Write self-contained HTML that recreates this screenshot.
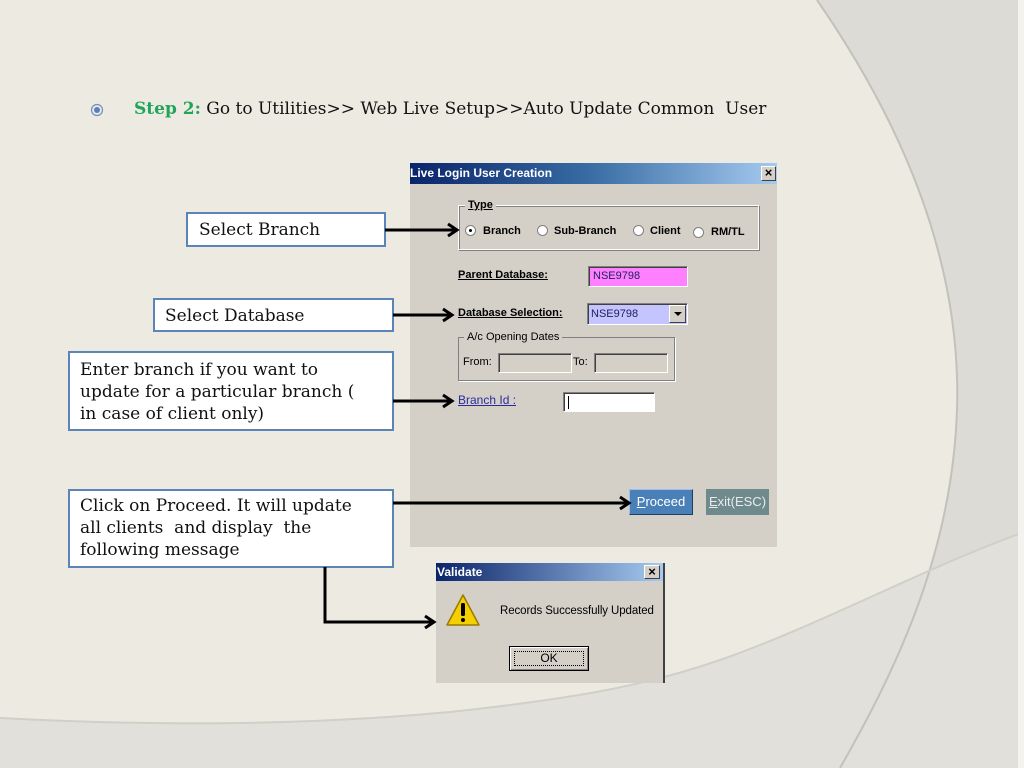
<!DOCTYPE html>
<html><head><meta charset="utf-8"><style>
*{margin:0;padding:0;box-sizing:border-box}
body{width:1024px;height:768px;position:relative;overflow:hidden;background:#ECEAE1;font-family:"Liberation Sans",sans-serif}
.a{position:absolute}
.box{position:absolute;background:#fff;border:2px solid #5B84B8;font-family:"DejaVu Serif",serif;font-size:17px;color:#111;line-height:22px;padding:5px 10px;white-space:nowrap}
.t{font-size:11px;color:#000;position:absolute;white-space:nowrap}
.field{position:absolute;border:1px solid;border-color:#808080 #fff #fff #808080;box-shadow:inset 1px 1px 0 #404040}
.radio{position:absolute;width:11px;height:11px;border-radius:50%;background:#fff;border:1px solid #808080}
</style></head><body>
<svg class="a" style="left:0;top:0" width="1024" height="768">
<path d="M817 0 C900 120 962 260 957 410 C952 560 890 680 840 768 L1024 768 L1024 0 Z" fill="#DCDBD5"/>
<path d="M0 718 C150 726 300 726 450 712 C560 700 640 688 720 660 C820 625 920 570 1024 532 L1024 768 L0 768 Z" fill="#E1E0DA"/>
<path d="M817 0 C900 120 962 260 957 410 C952 560 890 680 840 768" fill="none" stroke="#C2C1BA" stroke-width="2"/>
<path d="M0 718 C150 726 300 726 450 712 C560 700 640 688 720 660 C820 625 920 570 1024 532" fill="none" stroke="#D0CFC8" stroke-width="2"/>
<rect x="1018" y="0" width="6" height="768" fill="#F3F3F0"/>
</svg>
<svg class="a" style="left:90px;top:103px" width="14" height="14"><circle cx="7" cy="7" r="5.5" fill="none" stroke="#6C8FC4" stroke-width="1.2"/><circle cx="7" cy="7" r="3" fill="#5B7FBD"/></svg>
<div class="a" style="left:134px;top:99px;font-family:'DejaVu Serif',serif;font-size:17px;color:#111;white-space:nowrap"><b style="color:#22A45A">Step 2:</b> Go to Utilities&gt;&gt; Web Live Setup&gt;&gt;Auto Update Common&nbsp; User</div>

<div class="box" style="left:186px;top:212px;width:200px;height:35px;padding:5px 11px">Select Branch</div>
<div class="box" style="left:153px;top:298px;width:241px;height:34px;padding:5px 10px">Select Database</div>
<div class="box" style="left:68px;top:351px;width:326px;height:80px;padding:6px 10px 0">Enter branch if you want to<br>update for a particular branch (<br>in case of client only)</div>
<div class="box" style="left:68px;top:489px;width:326px;height:79px;padding:4px 10px 0">Click on Proceed. It will update<br>all clients&nbsp; and display&nbsp; the<br>following message</div>

<!-- main dialog -->
<div class="a" style="left:410px;top:163px;width:367px;height:384px;background:#D4D0C8"></div>
<div class="a" style="left:410px;top:163px;width:367px;height:21px;background:linear-gradient(90deg,#0A246A,#3A6EA5 50%,#A6CAF0);color:#fff;font-weight:bold;font-size:12px;padding:3px 0 0 0">Live Login User Creation</div>
<div class="a" style="left:761px;top:166px;width:15px;height:15px;background:#D4D0C8;border:1px solid;border-color:#fff #404040 #404040 #fff;font-size:13px;line-height:12px;text-align:center;font-weight:bold">×</div>
<div class="a" style="left:458px;top:205px;width:301px;height:45px;border:1px solid #fff;box-shadow:inset 1px 1px 0 #808080, 1px 1px 0 #808080"></div>
<div class="t" style="left:465px;top:199px;background:#D4D0C8;padding:0 3px;font-weight:bold;text-decoration:underline">Type</div>
<div class="radio" style="left:465px;top:225px"><div style="position:absolute;left:3px;top:3px;width:3px;height:3px;background:#000;border-radius:50%"></div></div>
<div class="t" style="left:483px;top:225px;font-weight:bold">Branch</div>
<div class="radio" style="left:537px;top:225px"></div>
<div class="t" style="left:554px;top:225px;font-weight:bold">Sub-Branch</div>
<div class="radio" style="left:633px;top:225px"></div>
<div class="t" style="left:650px;top:225px;font-weight:bold">Client</div>
<div class="radio" style="left:693px;top:227px"></div>
<div class="t" style="left:711px;top:226px;font-weight:bold">RM/TL</div>

<div class="t" style="left:458px;top:269px;font-weight:bold;text-decoration:underline">Parent Database:</div>
<div class="field" style="left:588px;top:266px;width:100px;height:21px;background:#FF80FF"><span class="t" style="left:4px;top:3px;color:#202060">NSE9798</span></div>
<div class="t" style="left:458px;top:307px;font-weight:bold;text-decoration:underline">Database Selection:</div>
<div class="field" style="left:587px;top:303px;width:101px;height:22px;background:#C4C4FF"><span class="t" style="left:3px;top:4px;color:#202060">NSE9798</span>
<div style="position:absolute;right:1px;top:1px;width:17px;height:18px;background:#D4D0C8;border:1px solid;border-color:#fff #404040 #404040 #fff"><div style="position:absolute;left:4px;top:6px;border-left:4px solid transparent;border-right:4px solid transparent;border-top:4px solid #000"></div></div></div>
<div class="a" style="left:458px;top:337px;width:217px;height:44px;border:1px solid #808080;box-shadow:1px 1px 0 #fff"></div>
<div class="t" style="left:464px;top:331px;background:#D4D0C8;padding:0 3px">A/c Opening Dates</div>
<div class="t" style="left:463px;top:356px">From:</div>
<div class="field" style="left:498px;top:353px;width:74px;height:20px;background:#D4D0C8"></div>
<div class="t" style="left:573px;top:356px">To:</div>
<div class="field" style="left:594px;top:353px;width:74px;height:20px;background:#D4D0C8"></div>
<div class="t" style="left:458px;top:393px;color:#2B2BA0;text-decoration:underline;font-size:12px">Branch Id :</div>
<div class="field" style="left:563px;top:392px;width:92px;height:20px;background:#fff"><div style="position:absolute;left:4px;top:3px;width:1px;height:13px;background:#000"></div></div>
<div class="a" style="left:629px;top:489px;width:64px;height:26px;background:#4A80B8;border:1px solid;border-color:#9CC0E8 #1E3E66 #1E3E66 #9CC0E8;color:#fff;font-size:13px;text-align:center;line-height:24px"><u>P</u>roceed</div>
<div class="a" style="left:706px;top:489px;width:63px;height:26px;background:#6F8A8C;color:#E8ECEC;font-size:13px;text-align:center;line-height:26px"><u>E</u>xit(ESC)</div>

<!-- validate -->
<div class="a" style="left:436px;top:563px;width:229px;height:120px;background:#D4D0C8;border-right:2px solid #404040"></div>
<div class="a" style="left:436px;top:563px;width:227px;height:18px;background:linear-gradient(90deg,#0A246A,#A6CAF0);color:#fff;font-weight:bold;font-size:12px;padding:2px 0 0 1px">Validate</div>
<div class="a" style="left:644px;top:565px;width:16px;height:14px;background:#D4D0C8;border:1px solid;border-color:#fff #404040 #404040 #fff;font-size:13px;line-height:12px;text-align:center;font-weight:bold">×</div>
<svg class="a" style="left:444px;top:592px" width="38" height="38"><path d="M19 3 L35 33 L3 33 Z" fill="#F5D000" stroke="#9A7A00" stroke-width="1.5" stroke-linejoin="round"/><rect x="17" y="11" width="4" height="13" rx="1.5" fill="#000"/><circle cx="19" cy="28" r="2" fill="#000"/></svg>
<div class="t" style="left:500px;top:605px;font-size:11.5px;letter-spacing:-0.1px">Records Successfully Updated</div>
<div class="a" style="left:509px;top:646px;width:80px;height:25px;background:#D4D0C8;border:1px solid #000;box-shadow:inset 1px 1px 0 #fff, inset -1px -1px 0 #808080;font-size:12px;text-align:center;line-height:23px"><div style="position:absolute;left:4px;top:4px;right:4px;bottom:4px;border:1px dotted #000"></div>OK</div>

<!-- arrows -->
<svg class="a" style="left:0;top:0" width="1024" height="768">
<g stroke="#000" stroke-width="3" fill="none">
<path d="M385 230 H455"/><path d="M448 224 L457 230 L448 236"/>
<path d="M393 315 H450"/><path d="M443 309 L452 315 L443 321"/>
<path d="M393 401 H450"/><path d="M443 395 L452 401 L443 407"/>
<path d="M393 503 H628"/><path d="M620 497 L629 503 L620 509"/>
<path d="M325 567 V622 H432"/><path d="M425 616 L434 622 L425 628"/>
</g></svg>
</body></html>
